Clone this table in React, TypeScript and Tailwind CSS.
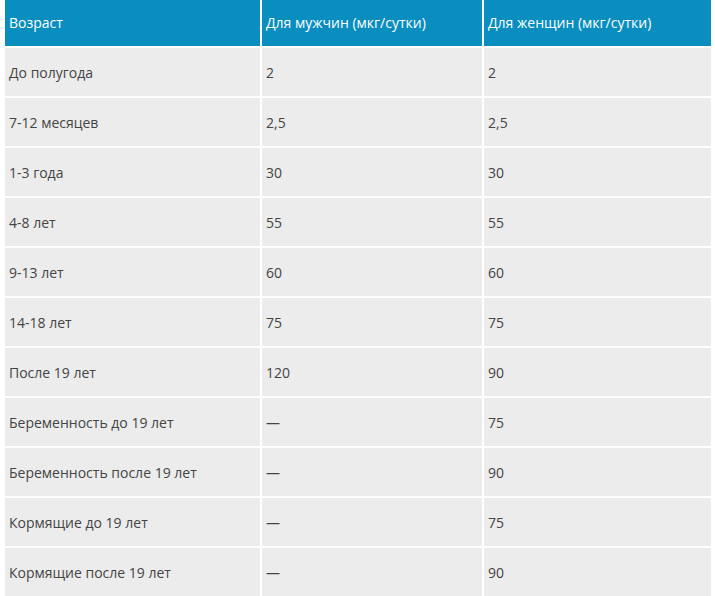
const rows: [string, string, string][] = [
  ["До полугода", "2", "2"],
  ["7-12 месяцев", "2,5", "2,5"],
  ["1-3 года", "30", "30"],
  ["4-8 лет", "55", "55"],
  ["9-13 лет", "60", "60"],
  ["14-18 лет", "75", "75"],
  ["После 19 лет", "120", "90"],
  ["Беременность до 19 лет", "—", "75"],
  ["Беременность после 19 лет", "—", "90"],
  ["Кормящие до 19 лет", "—", "75"],
  ["Кормящие после 19 лет", "—", "90"],
];

export default function App() {
  return (
    <div className="bg-white pl-[3px] pr-[2px] font-['Open_Sans',sans-serif] text-[14px]">
      <table className="w-full border-collapse">
        <thead>
          <tr className="h-[47px] bg-[#0a8dbf] text-left text-white">
            <th className="w-[257px] border-2 border-t-0 border-white px-[4px] pb-[1px] font-normal">Возраст</th>
            <th className="w-[222px] border-2 border-t-0 border-white px-[4px] pb-[1px] font-normal">Для мужчин (мкг/сутки)</th>
            <th className="border-2 border-t-0 border-white px-[4px] pb-[1px] font-normal">Для женщин (мкг/сутки)</th>
          </tr>
        </thead>
        <tbody>
          {rows.map((r) => (
            <tr key={r[0]} className="h-[50px] bg-[#ececec] text-[#444]">
              {r.map((c, i) => (
                <td key={i} className="border-2 border-white px-[4px] pt-[1px]">
                  {c}
                </td>
              ))}
            </tr>
          ))}
        </tbody>
      </table>
    </div>
  );
}
